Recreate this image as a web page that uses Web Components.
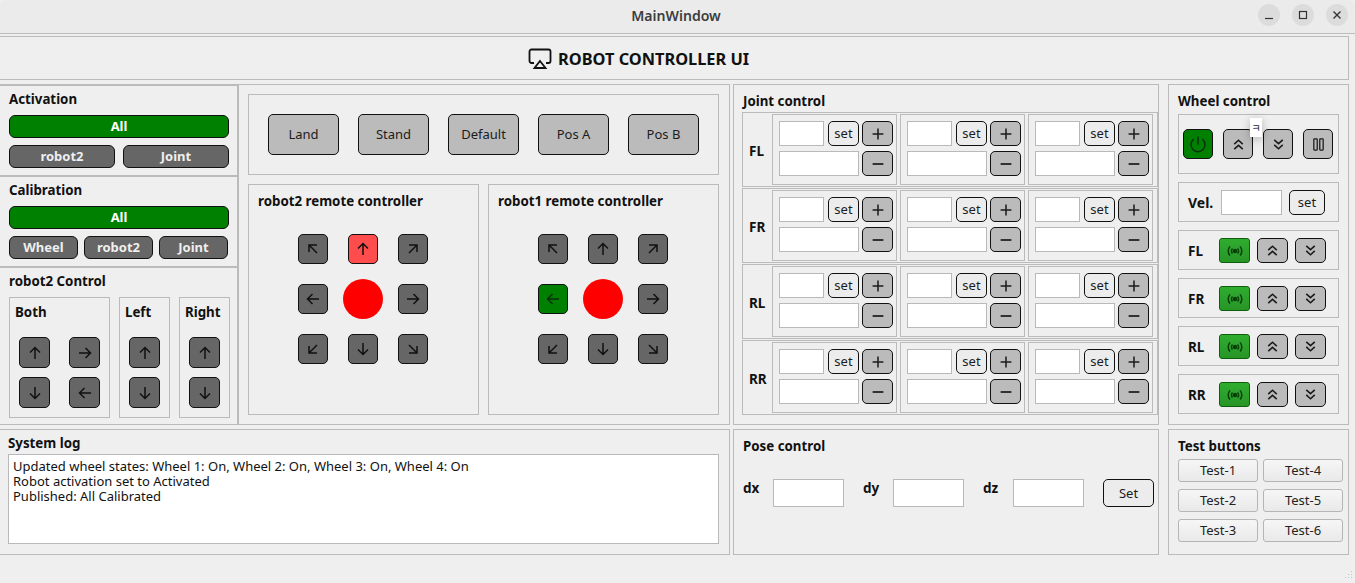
<!DOCTYPE html>
<html>
<head>
<meta charset="utf-8">
<title>MainWindow</title>
<style>
  html, body { margin: 0; padding: 0; height: 100%; overflow: hidden; background: #efefef; }
  body { font-family: "Noto Sans", "Open Sans", sans-serif; font-size: 13px; color: #111; }
</style>
</head>
<body>
<robot-app></robot-app>
<script>
// arrows and other glyphs used by the buttons
const ICONS = {
  up: '<path d="M10 16V4.500M5 9.500l5-5 5 5"/>',
  down: '<path d="M10 4v11.500M5 10.500l5 5 5-5"/>',
  left: '<path d="M16 10H4.500M9.500 5l-5 5 5 5"/>',
  right: '<path d="M4 10h11.500M10.500 5l5 5-5 5"/>',
  upleft: '<path d="M14 14L6 6M6 13V6h8"/>',
  upright: '<path d="M6 14L14 6M6 6h8v7"/>',
  downleft: '<path d="M14 6L6 14M6 7v7h8"/>',
  downright: '<path d="M6 6l8 8M14 7v7H6"/>',
  plus: '<path d="M4 10h12M10 4v12" stroke-width="1.7"/>',
  minus: '<path d="M4 10h12" stroke-width="1.9"/>',
  dblup: '<path d="M5 9.500l5-4.500 5 4.500M5 15.500l5-4.500 5 4.500" stroke-width="1.9"/>',
  dbldown: '<path d="M5 4.500l5 4.500 5-4.500M5 10.500l5 4.500 5-4.500" stroke-width="1.9"/>',
  pause: '<rect x="4.500" y="3.500" width="4" height="13" rx=".6"/><rect x="11.500" y="3.500" width="4" height="13" rx=".6"/>',
  power: '<path d="M10 2.500v8M5.600 5.200a7 7 0 1 0 8.800 0"/>',
  signal: '<circle cx="10" cy="10" r="1.500" fill="currentColor"/><path d="M7.500 7.500a3.500 3.500 0 0 0 0 5M12.500 7.500a3.500 3.500 0 0 1 0 5M5 5.500a6.500 6.500 0 0 0 0 9M15 5.500a6.500 6.500 0 0 1 0 9"/>'
};

class RcIcon extends HTMLElement {
  constructor() {
    super();
    this.attachShadow({ mode: 'open' });
  }
  connectedCallback() {
    const name = this.getAttribute('name');
    const size = this.getAttribute('size') || 20;
    this.shadowRoot.innerHTML = `
      <style>
        :host { display: inline-flex; }
        svg { fill: none; stroke: currentColor; stroke-width: 1.5; display: block; }
      </style>
      <svg width="${size}" height="${size}" viewBox="0 0 20 20">${ICONS[name]}</svg>`;
  }
}
customElements.define('rc-icon', RcIcon);

// all the push buttons: kind picks the colours
class RcBtn extends HTMLElement {
  constructor() {
    super();
    this.attachShadow({ mode: 'open' });
    this.shadowRoot.innerHTML = `
      <style>
        :host {
          display: flex; align-items: center; justify-content: center;
          box-sizing: border-box; border: 1px solid #111; border-radius: 5px;
          background: #bbb; color: #1c1c1c; font-size: 13px;
          line-height: 1; height: 100%; min-width: 0;
        }
        :host([kind="on"]) { background: #008000; color: #fff; font-weight: 700; height: 23px; border-radius: 6px; }
        :host([kind="off"]) { background: #666; color: #efefef; font-weight: 700; height: 23px; border-radius: 6px; }
        :host([kind="dark"]) { background: #666; color: #111; }
        :host([kind="red"]) { background: #ff4d4d; color: #111; }
        :host([kind="go"]) { background: #008000; color: #0c2c0c; }
        :host([kind="led"]) { background: linear-gradient(#30ac30, #279527); border-color: #0f5f0f; border-radius: 3px; color: #0a3f0a; }
        :host([kind="ghost"]) { background: #ececec; }
        :host([kind="flat"]) {
          background: linear-gradient(#f6f6f6, #e9e9e9); border-color: #b5b5b5; border-radius: 3px; color: #222;
        }
      </style>
      <slot></slot>`;
  }
}
customElements.define('rc-btn', RcBtn);

class RcInput extends HTMLElement {
  constructor() {
    super();
    this.attachShadow({ mode: 'open' });
    this.shadowRoot.innerHTML = `
      <style>
        :host { display: block; box-sizing: border-box; background: #fff; border: 1px solid #b9b9b9; height: 100%; }
      </style>`;
  }
}
customElements.define('rc-input', RcInput);

class RcTitle extends HTMLElement {
  constructor() {
    super();
    this.attachShadow({ mode: 'open' });
    this.shadowRoot.innerHTML = `
      <style>
        :host { display: block; font-weight: 700; font-size: 13.3px; line-height: 18px; color: #111; white-space: nowrap; }
      </style>
      <slot></slot>`;
  }
}
customElements.define('rc-title', RcTitle);

class WindowBar extends HTMLElement {
  constructor() {
    super();
    this.attachShadow({ mode: 'open' });
    this.shadowRoot.innerHTML = `
      <style>
        :host {
          display: grid; grid-template-columns: 1fr auto 1fr; align-items: center;
          box-sizing: border-box; height: 34px; background: #ebebeb; border-bottom: 1px solid #bdbdbd;
          border-radius: 6px 6px 0 0; padding: 0 7px 3px 4px;
        }
        .name { grid-column: 2; font-weight: 600; font-size: 14.1px; color: #3d3d3d; }
        .ctl { justify-self: end; display: flex; gap: 12px; }
        .c { width: 22px; height: 22px; border-radius: 50%; background: #dcdcdc; display: flex; align-items: center; justify-content: center; }
        svg { stroke: #333; fill: none; stroke-width: 1.2; }
      </style>
      <span class="name">MainWindow</span>
      <div class="ctl">
        <div class="c"><svg width="10" height="10" viewBox="0 0 10 10"><path d="M1 8.500h8"/></svg></div>
        <div class="c"><svg width="10" height="10" viewBox="0 0 10 10"><rect x="1.500" y="1.500" width="7" height="7"/></svg></div>
        <div class="c"><svg width="10" height="10" viewBox="0 0 10 10"><path d="M1.500 1.500l7 7M8.500 1.500l-7 7" stroke-width="1.4"/></svg></div>
      </div>`;
  }
}
customElements.define('window-bar', WindowBar);

class AppHeader extends HTMLElement {
  constructor() {
    super();
    this.attachShadow({ mode: 'open' });
    this.shadowRoot.innerHTML = `
      <style>
        :host {
          display: flex; align-items: center; gap: 6px;
          box-sizing: border-box; height: 44px; margin: 2px 6px 4px 0; padding: 1px 0 0 528px;
          border: 1px solid #bbb; border-left: 0; font-weight: 700; font-size: 16.35px; color: #111;
        }
        svg { fill: none; stroke: #111; stroke-width: 1.8; }
      </style>
      <svg width="24" height="22" viewBox="0 0 24 22">
        <path d="M6 15H3.500A2 2 0 0 1 1.500 13V3.500A2 2 0 0 1 3.500 1.500h17a2 2 0 0 1 2 2V13a2 2 0 0 1-2 2H18"/>
        <path d="M12 13l5.500 7h-11z"/>
      </svg>
      <slot></slot>`;
  }
}
customElements.define('app-header', AppHeader);

class LeftColumn extends HTMLElement {
  constructor() {
    super();
    this.attachShadow({ mode: 'open' });
    this.shadowRoot.innerHTML = `
      <style>
        :host {
          display: grid; grid-template-rows: 91px 91px 1fr; grid-template-columns: minmax(0, 1fr); box-sizing: border-box;
          border-top: 2px solid #bbb; border-right: 2px solid #bbb; border-bottom: 1px solid #bbb;
        }
        section { box-sizing: border-box; padding: 4px 8px 0 9px; border-bottom: 2px solid #bbb; min-width: 0; }
        section:last-child { border-bottom: 0; }
        .full { margin-top: 7px; }
        .two { margin-top: 7px; display: grid; grid-template-columns: 106px 106px; gap: 8px; }
        .three { margin-top: 7px; display: grid; grid-template-columns: 69px 69px 69px; gap: 6px; }
        .boxes { margin-top: 7px; display: grid; grid-template-columns: 101px 51px 51px; gap: 9px; height: 121px; }
        .box { padding: 5px 5px 0; border: 1px solid #bbb; box-sizing: border-box; }
        .pad { margin: 16px 4px 0; display: grid; grid-template-columns: repeat(auto-fill, 31px); grid-auto-rows: 31px; gap: 9px 19px; }
      </style>
      <section>
        <rc-title>Activation</rc-title>
        <div class="full"><rc-btn kind="on">All</rc-btn></div>
        <div class="two"><rc-btn kind="off">robot2</rc-btn><rc-btn kind="off">Joint</rc-btn></div>
      </section>
      <section>
        <rc-title>Calibration</rc-title>
        <div class="full"><rc-btn kind="on">All</rc-btn></div>
        <div class="three"><rc-btn kind="off">Wheel</rc-btn><rc-btn kind="off">robot2</rc-btn><rc-btn kind="off">Joint</rc-btn></div>
      </section>
      <section>
        <rc-title>robot2 Control</rc-title>
        <div class="boxes">
          <div class="box"><rc-title>Both</rc-title><div class="pad">
            <rc-btn kind="dark"><rc-icon name="up"></rc-icon></rc-btn><rc-btn kind="dark"><rc-icon name="right"></rc-icon></rc-btn>
            <rc-btn kind="dark"><rc-icon name="down"></rc-icon></rc-btn><rc-btn kind="dark"><rc-icon name="left"></rc-icon></rc-btn>
          </div></div>
          <div class="box"><rc-title>Left</rc-title><div class="pad">
            <rc-btn kind="dark"><rc-icon name="up"></rc-icon></rc-btn><rc-btn kind="dark"><rc-icon name="down"></rc-icon></rc-btn>
          </div></div>
          <div class="box"><rc-title>Right</rc-title><div class="pad">
            <rc-btn kind="dark"><rc-icon name="up"></rc-icon></rc-btn><rc-btn kind="dark"><rc-icon name="down"></rc-icon></rc-btn>
          </div></div>
        </div>
      </section>`;
  }
}
customElements.define('left-column', LeftColumn);

// 3x3 pad with the red stop dot in the middle
class ArrowPad extends HTMLElement {
  constructor() {
    super();
    this.attachShadow({ mode: 'open' });
  }
  connectedCallback() {
    const active = this.getAttribute('active');
    const kind = this.getAttribute('active-kind');
    const order = ['upleft', 'up', 'upright', 'left', null, 'right', 'downleft', 'down', 'downright'];
    const cells = order.map(n => n
      ? `<rc-btn kind="${n === active ? kind : 'dark'}"><rc-icon name="${n}"></rc-icon></rc-btn>`
      : '<div class="dot"></div>').join('');
    this.shadowRoot.innerHTML = `
      <style>
        :host { display: block; box-sizing: border-box; border: 1px solid #bbb; padding: 7px 9px 0; }
        .grid { margin: 24px 0 0 40px; display: grid; grid-template-columns: repeat(3, 30px); grid-auto-rows: 30px; gap: 20px; }
        .dot { width: 40px; height: 40px; margin: -5px; border-radius: 50%; background: #f00; }
      </style>
      <rc-title><slot></slot></rc-title>
      <div class="grid">${cells}</div>`;
  }
}
customElements.define('arrow-pad', ArrowPad);

class CenterColumn extends HTMLElement {
  constructor() {
    super();
    this.attachShadow({ mode: 'open' });
    this.shadowRoot.innerHTML = `
      <style>
        :host {
          display: grid; grid-template-rows: 81px 231px; row-gap: 9px; box-sizing: border-box;
          padding: 9px 10px 0 9px; border-top: 1px solid #bbb; border-right: 1px solid #bbb; border-bottom: 1px solid #bbb;
        }
        .poses { border: 1px solid #bbb; padding: 19px; display: grid; grid-template-columns: repeat(5, 71px); gap: 19px; box-sizing: border-box; }
        .remotes { display: grid; grid-template-columns: 231px 231px; gap: 9px; }
      </style>
      <div class="poses">
        <rc-btn>Land</rc-btn><rc-btn>Stand</rc-btn><rc-btn>Default</rc-btn><rc-btn>Pos A</rc-btn><rc-btn>Pos B</rc-btn>
      </div>
      <div class="remotes">
        <arrow-pad active="up" active-kind="red">robot2 remote controller</arrow-pad>
        <arrow-pad active="left" active-kind="go">robot1 remote controller</arrow-pad>
      </div>`;
  }
}
customElements.define('center-column', CenterColumn);

class JointCell extends HTMLElement {
  constructor() {
    super();
    this.attachShadow({ mode: 'open' });
    this.shadowRoot.innerHTML = `
      <style>
        :host {
          display: grid; box-sizing: border-box; border: 1px solid #bbb; padding: 6px 2px 7px 6px;
          grid-template-columns: 45px 31px 31px; grid-template-rows: 25px 25px; column-gap: 4px; row-gap: 5px;
        }
        .wide { grid-column: 1 / 3; }
        .pm { margin: 0 1px 0 -1px; }
      </style>
      <rc-input></rc-input>
      <rc-btn kind="ghost">set</rc-btn>
      <rc-btn class="pm"><rc-icon name="plus" size="18"></rc-icon></rc-btn>
      <rc-input class="wide"></rc-input>
      <rc-btn class="pm"><rc-icon name="minus" size="18"></rc-icon></rc-btn>`;
  }
}
customElements.define('joint-cell', JointCell);

class JointRow extends HTMLElement {
  constructor() {
    super();
    this.attachShadow({ mode: 'open' });
    this.shadowRoot.innerHTML = `
      <style>
        :host {
          display: grid; grid-template-columns: 26px 125px 125px 125px; column-gap: 3px; box-sizing: border-box;
          height: 75px; border: 1px solid #bbb; padding: 1px 4px 1px 0; align-items: stretch;
        }
        .n { align-self: center; padding: 2px 0 0 6px; font-weight: 700; font-size: 13.500px; }
      </style>
      <span class="n"><slot></slot></span>
      <joint-cell></joint-cell><joint-cell></joint-cell><joint-cell></joint-cell>`;
  }
}
customElements.define('joint-row', JointRow);

class JointPanel extends HTMLElement {
  constructor() {
    super();
    this.attachShadow({ mode: 'open' });
    this.shadowRoot.innerHTML = `
      <style>
        :host { display: block; box-sizing: border-box; border: 1px solid #bbb; padding: 7px 0 0 8px; }
        rc-title { padding-left: 1px; }
        .rows { display: grid; gap: 1px; margin-top: 2px; width: 416px; }
      </style>
      <rc-title>Joint control</rc-title>
      <div class="rows">
        <joint-row>FL</joint-row><joint-row>FR</joint-row><joint-row>RL</joint-row><joint-row>RR</joint-row>
      </div>`;
  }
}
customElements.define('joint-panel', JointPanel);

class WheelRow extends HTMLElement {
  constructor() {
    super();
    this.attachShadow({ mode: 'open' });
    this.shadowRoot.innerHTML = `
      <style>
        :host {
          display: grid; grid-template-columns: 24px 31px 31px 31px; column-gap: 7px; align-items: center; box-sizing: border-box;
          height: 40px; border: 1px solid #bbb; padding: 7px 0 7px 9px;
        }
        rc-btn { height: 25px; }
        .n { font-weight: 700; font-size: 13.500px; }
      </style>
      <span class="n"><slot></slot></span>
      <rc-btn kind="led"><rc-icon name="signal" size="20"></rc-icon></rc-btn>
      <rc-btn><rc-icon name="dblup" size="17"></rc-icon></rc-btn>
      <rc-btn><rc-icon name="dbldown" size="17"></rc-icon></rc-btn>`;
  }
}
customElements.define('wheel-row', WheelRow);

class WheelPanel extends HTMLElement {
  constructor() {
    super();
    this.attachShadow({ mode: 'open' });
    this.shadowRoot.innerHTML = `
      <style>
        :host { display: block; box-sizing: border-box; border: 1px solid #bbb; padding: 7px 9px 0 9px; }
        .rows { display: grid; gap: 8px; margin-top: 4px; }
        .top { position: relative; height: 60px; border: 1px solid #bbb; box-sizing: border-box; display: grid; grid-template-columns: repeat(4, 30px); gap: 10px; padding: 14px 0 0 4px; grid-auto-rows: 30px; }
        .vel { height: 40px; border: 1px solid #bbb; box-sizing: border-box; display: grid; grid-template-columns: 33px 61px 43px; align-items: center; padding: 7px 0 7px 9px; }
        .vel span { font-weight: 700; font-size: 14px; white-space: nowrap; }
        .vel rc-input, .vel rc-btn { height: 25px; }
        .vel rc-btn { margin-left: 7px; }
        .tip { position: absolute; left: 71px; top: 3px; width: 12px; height: 19px; background: #fff; box-shadow: 0 2px 9px rgba(0,0,0,.25); font-family: "Noto Sans CJK KR", sans-serif; font-size: 10px; line-height: 20px; color: #223; text-align: center; }
      </style>
      <rc-title>Wheel control</rc-title>
      <div class="rows">
        <div class="top">
          <rc-btn kind="go"><rc-icon name="power"></rc-icon></rc-btn>
          <rc-btn><rc-icon name="dblup" size="17"></rc-icon></rc-btn>
          <rc-btn><rc-icon name="dbldown" size="17"></rc-icon></rc-btn>
          <rc-btn><rc-icon name="pause" size="17"></rc-icon></rc-btn>
          <div class="tip">ㅋ</div>
        </div>
        <div class="vel"><span>Vel.</span><rc-input></rc-input><rc-btn kind="ghost">set</rc-btn></div>
        <wheel-row>FL</wheel-row><wheel-row>FR</wheel-row><wheel-row>RL</wheel-row><wheel-row>RR</wheel-row>
      </div>`;
  }
}
customElements.define('wheel-panel', WheelPanel);

class LogPanel extends HTMLElement {
  constructor() {
    super();
    this.attachShadow({ mode: 'open' });
    this.shadowRoot.innerHTML = `
      <style>
        :host { display: block; box-sizing: border-box; border-top: 1px solid #bbb; border-bottom: 1px solid #bbb; border-right: 1px solid #bbb; padding: 4px 10px 0 8px; }
        .log { box-sizing: border-box; height: 90px; margin-top: 2px; background: #fff; border: 1px solid #b9b9b9; padding: 4px 4px; font-size: 13px; line-height: 15px; color: #111; }
        ::slotted(div) { white-space: nowrap; }
      </style>
      <rc-title>System log</rc-title>
      <div class="log"><slot></slot></div>`;
  }
}
customElements.define('log-panel', LogPanel);

class PosePanel extends HTMLElement {
  constructor() {
    super();
    this.attachShadow({ mode: 'open' });
    this.shadowRoot.innerHTML = `
      <style>
        :host { display: block; box-sizing: border-box; border: 1px solid #bbb; padding: 7px 4px 0 9px; }
        .row { margin-top: 24px; display: grid; grid-template-columns: 30px 71px 19px 30px 71px 19px 30px 71px 19px 51px; height: 28px; }
        .l { font-weight: 700; font-size: 13.500px; line-height: 18px; }
      </style>
      <rc-title>Pose control</rc-title>
      <div class="row">
        <span class="l">dx</span><rc-input></rc-input><i></i>
        <span class="l">dy</span><rc-input></rc-input><i></i>
        <span class="l">dz</span><rc-input></rc-input><i></i>
        <rc-btn kind="ghost">Set</rc-btn>
      </div>`;
  }
}
customElements.define('pose-panel', PosePanel);

class TestPanel extends HTMLElement {
  constructor() {
    super();
    this.attachShadow({ mode: 'open' });
    this.shadowRoot.innerHTML = `
      <style>
        :host { display: block; box-sizing: border-box; border: 1px solid #bbb; padding: 7px 0 0 9px; }
        .g { margin-top: 4px; display: grid; grid-template-columns: 80px 80px; column-gap: 5px; row-gap: 7px; grid-auto-flow: column; grid-template-rows: repeat(3, 23px); }
      </style>
      <rc-title>Test buttons</rc-title>
      <div class="g">
        <rc-btn kind="flat">Test-1</rc-btn><rc-btn kind="flat">Test-2</rc-btn><rc-btn kind="flat">Test-3</rc-btn>
        <rc-btn kind="flat">Test-4</rc-btn><rc-btn kind="flat">Test-5</rc-btn><rc-btn kind="flat">Test-6</rc-btn>
      </div>`;
  }
}
customElements.define('test-panel', TestPanel);

class RobotApp extends HTMLElement {
  constructor() {
    super();
    this.attachShadow({ mode: 'open' });
    this.shadowRoot.innerHTML = `
      <style>
        :host { display: block; width: 1355px; height: 583px; overflow: hidden; position: relative; }
        .main {
          display: grid; grid-template-columns: 239px 491px 429px 190px; grid-template-rows: 341px 126px;
          row-gap: 4px;
        }
        joint-panel, pose-panel { margin-left: 3px; }
        wheel-panel, test-panel { margin-left: 9px; }
        log-panel { grid-column: 1 / 3; }
        .grip { position: absolute; right: 2px; bottom: 2px; }
      </style>
      <window-bar></window-bar>
      <app-header>ROBOT CONTROLLER UI</app-header>
      <div class="main">
        <left-column></left-column>
        <center-column></center-column>
        <joint-panel></joint-panel>
        <wheel-panel></wheel-panel>
        <log-panel>
          <div>Updated wheel states: Wheel 1: On, Wheel 2: On, Wheel 3: On, Wheel 4: On</div>
          <div>Robot activation set to Activated</div>
          <div>Published: All Calibrated</div>
        </log-panel>
        <pose-panel></pose-panel>
        <test-panel></test-panel>
      </div>
      <svg class="grip" width="10" height="10" viewBox="0 0 10 10" fill="#c4c4c4">
        <rect x="8" y="0" width="1" height="1"/><rect x="5" y="3" width="1" height="1"/><rect x="8" y="3" width="1" height="1"/>
        <rect x="2" y="6" width="1" height="1"/><rect x="5" y="6" width="1" height="1"/><rect x="8" y="6" width="1" height="1"/>
      </svg>`;
  }
}
customElements.define('robot-app', RobotApp);
</script>
</body>
</html>
